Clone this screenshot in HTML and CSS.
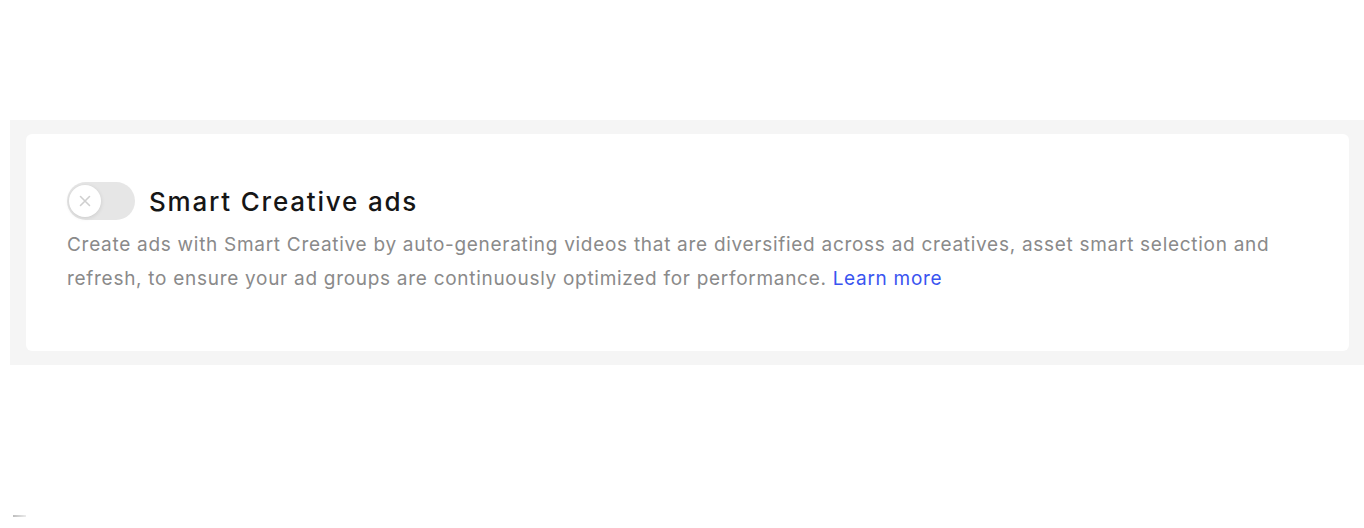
FILE: index.html
```html
<!DOCTYPE html>
<html>
<head>
<meta charset="utf-8">
<link rel="stylesheet" href="styles.css">
</head>
<body>
<div class="band">
  <div class="card">
    <div class="title-row">
      <div class="toggle">
        <div class="knob">
          <svg width="14" height="14" viewBox="0 0 14 14"><path d="M2.5 2.5 L11.5 11.5 M11.5 2.5 L2.5 11.5" stroke="#cfcfcf" stroke-width="1.6" stroke-linecap="round" fill="none"/></svg>
        </div>
      </div>
      <h2 class="title">Smart Creative ads</h2>
    </div>
    <p class="desc">Create ads with Smart Creative by auto-generating videos that are diversified across ad creatives, asset smart selection and refresh, to ensure your ad groups are continuously optimized for performance. <a class="link" href="#">Learn more</a></p>
  </div>
</div>
<div class="artifact"></div>
</body>
</html>
```
FILE: styles.css
```css
html, body {
  margin: 0;
  padding: 0;
  background: #ffffff;
  font-family: Inter, "Noto Sans", sans-serif;
}
body {
  padding-top: 120px;
  padding-left: 10px;
  height: 528px;
  box-sizing: border-box;
  position: relative;
}
.band {
  background: #f5f5f5;
  padding: 14px 15px 14px 16px;
}
.card {
  background: #ffffff;
  border-radius: 6px;
  padding: 48px 41px 55px 41px;
}
.title-row {
  display: flex;
  align-items: center;
  gap: 14px;
}
.toggle {
  width: 68px;
  height: 38px;
  border-radius: 19px;
  background: #e6e6e6;
  display: flex;
  align-items: center;
  padding-left: 2px;
  box-sizing: border-box;
  flex-shrink: 0;
}
.knob {
  width: 32px;
  height: 32px;
  border-radius: 50%;
  background: #ffffff;
  box-shadow: 0 1px 4px rgba(0,0,0,0.12);
  display: flex;
  align-items: center;
  justify-content: center;
}
.knob svg { display: block; }
.title {
  margin: 0;
  font-size: 26px;
  font-weight: 500;
  color: #161616;
  letter-spacing: 1.8px;
}
.desc {
  margin: 8px 0 0 0;
  font-size: 19px;
  line-height: 34px;
  color: #8a8a8a;
  letter-spacing: 0.71px;
}
.link {
  color: #3a55f0;
  text-decoration: none;
}
.artifact {
  position: absolute;
  left: 13px;
  top: 515px;
  width: 13px;
  height: 2px;
  background: linear-gradient(90deg, #bdbdbd, #ececec);
}
```
